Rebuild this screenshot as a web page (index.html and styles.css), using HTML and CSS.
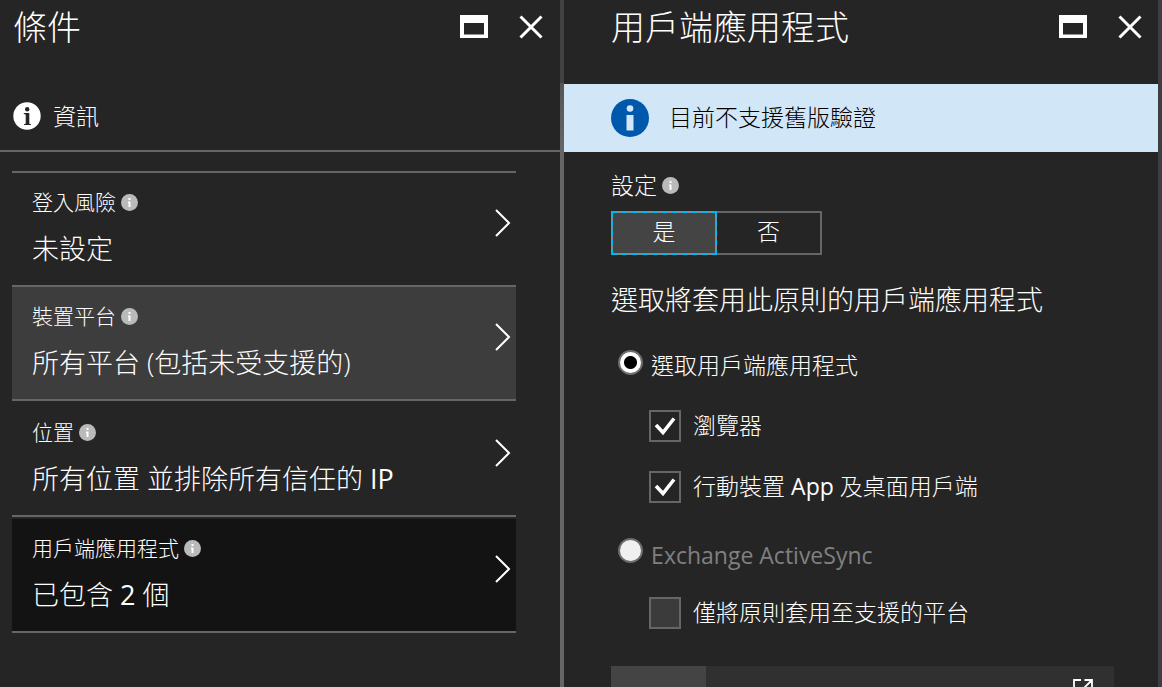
FILE: index.html
```html
<!DOCTYPE html>
<html lang="zh-Hant">
<head>
<meta charset="utf-8">
<title>條件</title>
<link rel="stylesheet" href="styles.css">
</head>
<body>
<svg class="defs" aria-hidden="true">
  <symbol id="window" viewBox="0 0 28 24"><path fill="currentColor" fill-rule="evenodd" d="M0 0h28v23H0zM4 8v11.500h20V8z"/></symbol>
  <symbol id="close" viewBox="0 0 24 24"><path fill="none" stroke="currentColor" stroke-width="3" d="M1.500 1.500l21 21M22.500 1.500l-21 21"/></symbol>
  <symbol id="hint" viewBox="0 0 17 17"><circle cx="8.500" cy="8.500" r="8.500" fill="#bababa"/><path fill="#fff" d="M7.500 4h2v2h-2zM7 7.500h2.500V13H7.500V9H7z"/></symbol>
  <symbol id="chevron" viewBox="0 0 16 28"><path fill="none" stroke="currentColor" stroke-width="2" d="M1 1l13 13L1 27"/></symbol>
  <symbol id="check" viewBox="0 0 32 32"><path fill="none" stroke="#fff" stroke-width="3.600" d="M7 15l7 7.500L25 8.500"/></symbol>
</svg>
<main class="blades">
  <section class="blade blade-conditions">
    <header class="blade-header">
      <h1 class="title">條件</h1>
      <button class="icon-button" aria-label="最大化"><svg class="icon-window"><use href="#window"/></svg></button>
      <button class="icon-button" aria-label="關閉"><svg class="icon-close"><use href="#close"/></svg></button>
    </header>
    <div class="command-bar">
      <button class="command">
        <svg class="icon-info" viewBox="0 0 28 28"><circle cx="14" cy="14" r="13.700" fill="#fff"/><circle cx="14.200" cy="7.200" r="2.200" fill="#252525"/><path fill="#252525" d="M10.800 11H16.300v10.800l1.700.5V23h-7v-.7l1.700-.5v-9.300l-1.900-.6z"/></svg>
        資訊
      </button>
    </div>
    <div class="conditions">
      <button class="condition">
        <span class="condition-text"><span class="condition-label">登入風險<svg class="icon-hint"><use href="#hint"/></svg></span><span class="condition-value">未設定</span></span>
        <svg class="icon-chevron"><use href="#chevron"/></svg>
      </button>
      <button class="condition hovered">
        <span class="condition-text"><span class="condition-label">裝置平台<svg class="icon-hint"><use href="#hint"/></svg></span><span class="condition-value">所有平台 (包括未受支援的)</span></span>
        <svg class="icon-chevron"><use href="#chevron"/></svg>
      </button>
      <button class="condition spaced">
        <span class="condition-text"><span class="condition-label">位置<svg class="icon-hint"><use href="#hint"/></svg></span><span class="condition-value">所有位置 並排除所有信任的 <span class="latin">IP</span></span></span>
        <svg class="icon-chevron"><use href="#chevron"/></svg>
      </button>
      <button class="condition spaced selected">
        <span class="condition-text"><span class="condition-label">用戶端應用程式<svg class="icon-hint"><use href="#hint"/></svg></span><span class="condition-value">已包含 <span class="latin">2</span> 個</span></span>
        <svg class="icon-chevron"><use href="#chevron"/></svg>
      </button>
    </div>
  </section>
  <section class="blade blade-apps">
    <header class="blade-header">
      <h1 class="title">用戶端應用程式</h1>
      <button class="icon-button" aria-label="最大化"><svg class="icon-window"><use href="#window"/></svg></button>
      <button class="icon-button" aria-label="關閉"><svg class="icon-close"><use href="#close"/></svg></button>
    </header>
    <div class="notice">
      <svg class="icon-notice" viewBox="0 0 38 38"><circle cx="19" cy="19" r="19" fill="#0058ad"/><circle cx="19" cy="9.500" r="3.300" fill="#d1e6f7"/><path fill="#d1e6f7" d="M15.500 16h7v15.500h-7z"/></svg>
      <p class="notice-text">目前不支援舊版驗證</p>
    </div>
    <div class="settings">
      <div class="setting-label" id="configure">設定<svg class="icon-hint"><use href="#hint"/></svg></div>
      <div class="toggle" role="group" aria-labelledby="configure">
        <button class="toggle-option active" aria-pressed="true">是</button>
        <button class="toggle-option" aria-pressed="false">否</button>
      </div>
      <h2 class="subtitle">選取將套用此原則的用戶端應用程式</h2>
      <label class="radio-row"><input class="radio" type="radio" name="apps" checked><span>選取用戶端應用程式</span></label>
      <div class="checks">
        <label class="check-row"><span class="check-box"><input class="check" type="checkbox" checked><svg class="check-mark"><use href="#check"/></svg></span><span class="check-text">瀏覽器</span></label>
        <label class="check-row"><span class="check-box"><input class="check" type="checkbox" checked><svg class="check-mark"><use href="#check"/></svg></span><span class="check-text">行動裝置 <span class="latin">App</span> 及桌面用戶端</span></label>
      </div>
      <label class="radio-row muted"><input class="radio" type="radio" name="apps"><span class="latin">Exchange ActiveSync</span></label>
      <div class="checks checks-single">
        <label class="check-row"><span class="check-box"><input class="check off" type="checkbox"></span><span class="check-text">僅將原則套用至支援的平台</span></label>
      </div>
      <div class="panel">
        <div class="panel-tab"></div>
        <button class="panel-open" aria-label="開啟"><svg class="icon-open" viewBox="0 0 20 20"><path fill="none" stroke="#fff" stroke-width="1.800" d="M8 1H1v18h18v-7M11.500 1H19v7.500M19 1L8 12"/></svg></button>
      </div>
    </div>
  </section>
</main>
</body>
</html>
```

FILE: styles.css
```css
* {
  box-sizing: border-box;
}

body {
  margin: 0;
  background: #252525;
  color: #fff;
  font-family: "Open Sans", "Noto Sans CJK TC", sans-serif;
  font-size: 23px;
  font-weight: 300;
  line-height: 32px;
}

button {
  margin: 0;
  padding: 0;
  border: 0;
  background: none;
  color: inherit;
  font: inherit;
}

svg {
  display: block;
  flex: none;
}

.defs {
  display: none;
}

.latin {
  font-weight: 400;
}

.blades {
  display: flex;
  height: 100vh;
  overflow: hidden;
}

.blade {
  min-width: 0;
  border-right: 4px solid #666;
}

.blade-conditions {
  flex: 564;
  border-image: linear-gradient(#424242 84px, #555 84px, #666 152px) 1;
}

.blade-apps {
  flex: 598;
  border-color: #3e3e42;
}

.blade-header {
  display: flex;
  align-items: flex-start;
  gap: 31px;
  height: 84px;
  padding: 3px 17px 0 13px;
}

.blade-apps .blade-header {
  padding-right: 16px;
  padding-left: 47px;
}

.title {
  flex: 1;
  margin: 0;
  font-size: 34px;
  font-weight: 300;
  line-height: 48px;
}

.icon-button {
  display: flex;
  align-items: center;
  height: 48px;
}

.icon-window {
  width: 28px;
  height: 24px;
}

.icon-close {
  width: 24px;
  height: 24px;
}

.command-bar {
  display: flex;
  align-items: center;
  height: 68px;
  padding: 0 13px 2px;
  border-bottom: 2px solid #666;
}

.command {
  display: flex;
  align-items: center;
  gap: 12px;
}

.icon-info {
  width: 28px;
  height: 28px;
}

.conditions {
  display: flex;
  flex-direction: column;
  margin: 19px 44px 0 12px;
  border-top: 2px solid #666;
}

.condition {
  display: flex;
  align-items: center;
  justify-content: space-between;
  padding: 6px 5px 18px 20px;
  border-bottom: 2px solid #666;
  text-align: left;
}

.condition.spaced {
  margin-top: 2px;
}

.condition.hovered {
  background: #3d3d3d;
}

.condition.selected {
  background: #131313;
}

.condition-text {
  display: flex;
  flex-direction: column;
  gap: 6px;
}

.condition-label {
  display: flex;
  align-items: center;
  gap: 5px;
  font-size: 21px;
  line-height: 46px;
}

.condition-value {
  font-size: 27px;
  line-height: 36px;
}

.icon-hint {
  width: 17px;
  height: 17px;
}

.icon-chevron {
  width: 16px;
  height: 28px;
}

.notice {
  display: flex;
  align-items: center;
  gap: 20px;
  height: 68px;
  padding: 0 47px;
  background: #d1e6f7;
  color: #000;
}

.notice-text {
  margin: 0;
  padding-bottom: 2px;
}

.icon-notice {
  width: 38px;
  height: 38px;
}

.settings {
  padding: 17px 44px 0 47px;
}

.setting-label {
  display: flex;
  align-items: center;
  gap: 5px;
}

.toggle {
  display: flex;
  margin-top: 10px;
}

.toggle-option {
  width: 105px;
  height: 44px;
  padding-bottom: 4px;
  border: 2px solid #666;
  border-left: 0;
}

.toggle-option.active {
  width: 106px;
  border: 2px solid #8a8a8a;
  outline: 2px dashed #00b7f0;
  outline-offset: -2px;
  background: #444;
}

.subtitle {
  margin: 25px 0 0;
  font-size: 27px;
  font-weight: 300;
  line-height: 40px;
}

.radio-row {
  display: flex;
  align-items: center;
  gap: 8px;
  margin: 29px 0 0 7px;
}

.radio {
  flex: none;
  appearance: none;
  width: 25px;
  height: 25px;
  margin: 0 0 6px;
  border: 2px solid #6e6e6e;
  border-radius: 50%;
  background: #f0f0f0;
}

.radio:checked {
  background: radial-gradient(circle, #000 6px, #fff 7px);
}

.radio-row.muted {
  margin-top: 35px;
  color: #808080;
}

.muted .radio {
  margin-bottom: 8px;
}

.checks {
  display: flex;
  flex-direction: column;
  gap: 29px;
  margin: 29px 0 0 38px;
}

.checks-single {
  margin-top: 26px;
}

.check-row {
  display: flex;
  align-items: center;
  gap: 12px;
}

.check-text {
  margin-top: -2px;
}

.check-box {
  display: grid;
  flex: none;
}

.check {
  grid-area: 1 / 1;
  appearance: none;
  width: 32px;
  height: 32px;
  margin: 0;
  border: 2px solid #666;
}

.check.off {
  background: #3b3b3b;
}

.check-mark {
  grid-area: 1 / 1;
  width: 32px;
  height: 32px;
  pointer-events: none;
}

.panel {
  display: flex;
  justify-content: space-between;
  height: 60px;
  margin-top: 37px;
  background: #303030;
}

.panel-tab {
  width: 95px;
  background: #444;
}

.panel-open {
  display: flex;
  padding: 13px 21px;
}

.icon-open {
  width: 20px;
  height: 20px;
}
```
